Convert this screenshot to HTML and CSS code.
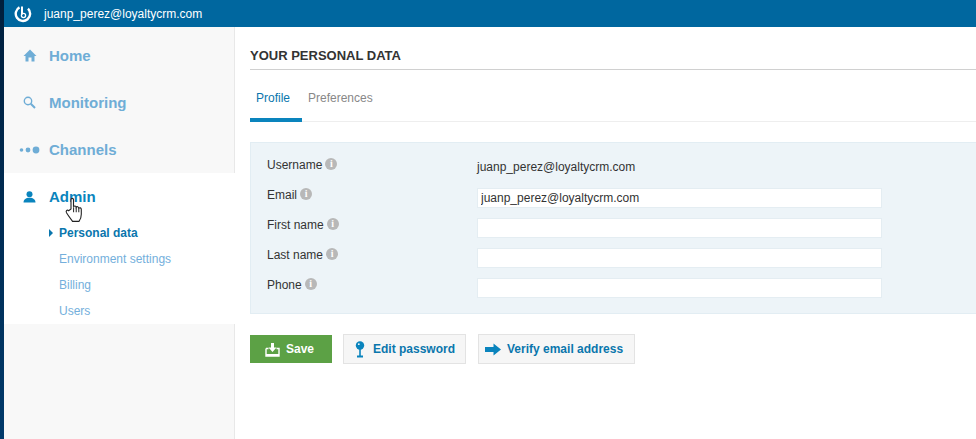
FILE: index.html
```html
<!DOCTYPE html>
<html lang="en">
<head>
    <meta charset="UTF-8">
    <meta name="viewport" content="width=device-width, initial-scale=1.0">
    <title>Your personal data</title>
    <link rel="stylesheet" href="styles.css">
</head>
<body>
    <div class="strip"></div>
    <div class="app">
        <header class="topbar">
            <svg class="logo" width="18" height="18" viewBox="0 0 18 18">
                <path d="M5.5 2.4A7.2 7.2 0 1 0 14 3.6" fill="none" stroke="#fff" stroke-width="2.4"/>
                <path d="M8 1.5v8" stroke="#fff" stroke-width="2" fill="none"/>
                <circle cx="9.5" cy="10.5" r="2.1" fill="none" stroke="#fff" stroke-width="1.3"/>
            </svg>
            <span>juanp_perez@loyaltycrm.com</span>
        </header>
        <div class="layout">
            <nav class="sidebar">
                <a class="nav-item">
                    <span class="nav-icon">
                        <svg width="14" height="13" viewBox="0 0 14 13"><path d="M7 0.5 13.5 7H11.5V12.5H8.5V8.5H5.5V12.5H2.5V7H0.5Z" fill="#6fadd6"/></svg>
                    </span>
                    Home
                </a>
                <a class="nav-item">
                    <span class="nav-icon">
                        <svg width="13" height="13" viewBox="0 0 13 13"><circle cx="5" cy="5" r="3.7" fill="none" stroke="#6fadd6" stroke-width="1.4"/><path d="M7.8 7.8 12 12" stroke="#6fadd6" stroke-width="2"/></svg>
                    </span>
                    Monitoring
                </a>
                <a class="nav-item">
                    <span class="nav-icon">
                        <svg width="22" height="8" viewBox="0 0 22 8"><circle cx="2.5" cy="4" r="1.8" fill="#6fadd6"/><circle cx="9" cy="4" r="2.4" fill="#6fadd6"/><circle cx="17" cy="4" r="3.4" fill="#6fadd6"/></svg>
                    </span>
                    Channels
                </a>
                <div class="nav-group">
                    <a class="nav-item active">
                        <span class="nav-icon">
                            <svg width="13" height="12" viewBox="0 0 13 12"><circle cx="6.5" cy="3.2" r="3" fill="#0a84bd"/><path d="M0.5 11.5C0.5 8.5 3 7.5 4.8 6.8H8.2C10 7.5 12.5 8.5 12.5 11.5Z" fill="#0a84bd"/></svg>
                        </span>
                        Admin
                    </a>
                    <ul class="subnav">
                        <li class="current">Personal data</li>
                        <li>Environment settings</li>
                        <li>Billing</li>
                        <li>Users</li>
                    </ul>
                    <svg class="cursor" width="20" height="26" viewBox="0 0 20 24" preserveAspectRatio="none">
                        <path d="M6 11V2.5C6 0.8 8.5 0.8 8.5 2.5V9C9 8 11 8 11.2 9.5C11.8 8.6 13.6 8.8 13.8 10.3C14.6 9.6 16.3 10 16.3 11.5V16C16.3 19 15.3 21 14 22.5H7.5C6 20.5 3.5 17.5 1.5 14.5C0.5 12.8 2.2 11.5 3.6 12.6Z" fill="#fff" stroke="#222" stroke-width="1.1"/>
                        <path d="M8.6 9.5V14M11.2 9.5V14M13.8 10.3V14" stroke="#222" stroke-width="1"/>
                    </svg>
                </div>
            </nav>
            <main class="content">
                <h1 class="page-title">YOUR PERSONAL DATA</h1>
                <div class="tabs">
                    <a class="tab active">Profile</a>
                    <a class="tab">Preferences</a>
                </div>
                <form class="panel">
                    <div class="row">
                        <label>Username <i class="info">i</i></label>
                        <span class="value">juanp_perez@loyaltycrm.com</span>
                    </div>
                    <div class="row">
                        <label>Email <i class="info">i</i></label>
                        <input type="text" value="juanp_perez@loyaltycrm.com">
                    </div>
                    <div class="row">
                        <label>First name <i class="info">i</i></label>
                        <input type="text">
                    </div>
                    <div class="row">
                        <label>Last name <i class="info">i</i></label>
                        <input type="text">
                    </div>
                    <div class="row">
                        <label>Phone <i class="info">i</i></label>
                        <input type="text">
                    </div>
                </form>
                <div class="actions">
                    <button class="btn btn-save" type="button">
                        <svg width="15" height="15" viewBox="0 0 15 15"><path d="M1 6.5V14H14V6.5H11.5M3.5 6.5H1" fill="none" stroke="#fff" stroke-width="1.4"/><path d="M6 1H9V5.5H11.5L7.5 10 3.5 5.5H6Z" fill="#fff"/><path d="M1 12H14V14H1Z" fill="#fff"/></svg>
                        Save
                    </button>
                    <button class="btn btn-edit" type="button">
                        <svg width="10" height="17" viewBox="0 0 10 17"><circle cx="5" cy="4.5" r="4.2" fill="#0a84bd"/><circle cx="3.8" cy="3.2" r="0.9" fill="#f6f6f6"/><path d="M4.2 8H5.8V14.5H8V16.5H2V14.5H4.2Z" fill="#0a84bd"/></svg>
                        Edit password
                    </button>
                    <button class="btn btn-verify" type="button">
                        <svg width="16" height="13" viewBox="0 0 16 13"><path d="M0 4H8.5V0.5L16 6.5 8.5 12.5V9H0Z" fill="#0a84bd"/></svg>
                        Verify email address
                    </button>
                </div>
            </main>
        </div>
    </div>
</body>
</html>
```

FILE: styles.css
```css
* {
    box-sizing: border-box;
}

html, body {
    height: 100%;
}

body {
    margin: 0;
    display: flex;
    overflow: hidden;
    font-family: "Liberation Sans", Arial, sans-serif;
    font-size: 12px;
    color: #333;
    background-color: #fff;
}

.strip {
    width: 4px;
    flex: none;
    background: linear-gradient(to bottom, #001f3d, #013a6b);
}

.app {
    flex: 1;
    min-width: 0;
    display: flex;
    flex-direction: column;
}

.topbar {
    height: 27px;
    flex: none;
    display: flex;
    align-items: center;
    gap: 12px;
    padding-left: 10px;
    background-color: #00679f;
    color: #fff;
}

.layout {
    flex: 1;
    display: flex;
    min-height: 0;
}

/* left menu */
.sidebar {
    width: 231px;
    flex: none;
    padding-top: 5px;
    background-color: #f8f8f8;
    border-right: 1px solid #e8e8e8;
}

.nav-item {
    height: 47px;
    display: flex;
    align-items: center;
    font-size: 15px;
    font-weight: bold;
    color: #6fadd6;
}

.nav-icon {
    width: 45px;
    flex: none;
    display: flex;
    justify-content: center;
    padding-left: 6px;
}

.nav-group {
    position: relative;
    height: 151px;
    margin-right: -1px;
    background-color: #fff;
}

.nav-item.active {
    color: #0a84bd;
}

.subnav {
    list-style: none;
    margin: 0;
    padding: 0 0 0 55px;
    color: #74afdc;
}

.subnav li {
    height: 26px;
    line-height: 26px;
}

.subnav .current {
    position: relative;
    font-weight: bold;
    color: #0a76ad;
}

.subnav .current::before {
    content: "";
    position: absolute;
    left: -10px;
    top: 9px;
    border-left: 4px solid #0a76ad;
    border-top: 4px solid transparent;
    border-bottom: 4px solid transparent;
}

.cursor {
    position: absolute;
    left: 61px;
    top: 24px;
}

/* main area */
.content {
    flex: 1;
    min-width: 0;
    padding: 20px 0 0 15px;
}

.page-title {
    margin: 0;
    height: 23px;
    font-size: 13px;
    line-height: 17px;
    font-weight: bold;
    color: #333;
    border-bottom: 1px solid #d0d0d0;
}

.tabs {
    display: flex;
    height: 52px;
    border-bottom: 1px solid #eee;
}

.tab {
    padding: 0 6px;
    height: 52px;
    line-height: 56px;
    color: #888;
}

.tab.active {
    width: 52px;
    color: #0a76ad;
    border-bottom: 4px solid #0a84bd;
}

.panel {
    margin-top: 20px;
    height: 172px;
    padding: 10px 0 0 16px;
    background-color: #edf4f8;
    border: 1px solid #e2edf3;
    border-right: none;
}

.row {
    height: 30px;
    display: flex;
    align-items: center;
}

.row label {
    width: 210px;
    flex: none;
    display: flex;
    align-items: center;
    gap: 3px;
    margin-top: -6px;
}

.info {
    width: 12px;
    height: 12px;
    margin-top: -2px;
    border-radius: 50%;
    background-color: #b8b8b8;
    color: #fff;
    font-family: "Liberation Serif", serif;
    font-size: 10px;
    font-weight: bold;
    font-style: normal;
    line-height: 12px;
    text-align: center;
}

.value {
    margin-top: -2px;
}

.row input {
    width: 405px;
    height: 20px;
    padding: 0 3px;
    font: inherit;
    color: #333;
    background-color: #fff;
    border: 1px solid #e4edf2;
}

.actions {
    display: flex;
    align-items: center;
    margin-top: 20px;
}

.btn {
    display: flex;
    align-items: center;
    height: 30px;
    padding: 0;
    font-family: inherit;
    font-size: 12px;
    font-weight: bold;
    color: #0a76ad;
    background-color: #f6f6f6;
    border: 1px solid #e3e3e3;
}

.btn-save {
    width: 82px;
    height: 28px;
    gap: 6px;
    padding-left: 15px;
    margin-right: 11px;
    color: #fff;
    background-color: #5ca145;
    border: none;
}

.btn-edit {
    width: 123px;
    gap: 8px;
    padding-left: 11px;
    margin-right: 12px;
}

.btn-verify {
    width: 157px;
    gap: 6px;
    padding-left: 6px;
}
```
